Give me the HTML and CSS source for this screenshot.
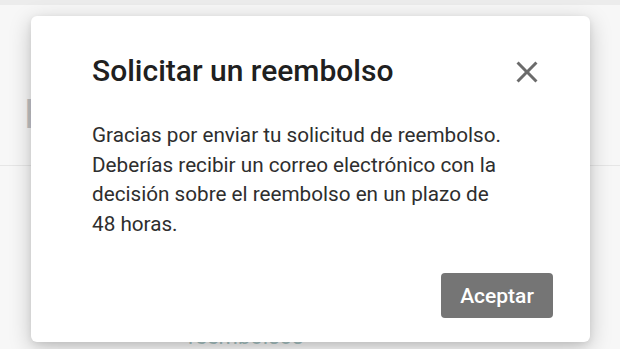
FILE: index.html
```html
<!DOCTYPE html>
<html lang="es">
<head>
<meta charset="utf-8">
<title>Solicitar un reembolso</title>
<link rel="stylesheet" href="styles.css">
</head>
<body>
<div class="page">
  <div class="topbar"></div>
  <h1 class="page-title">Historial</h1>
  <div class="divider"></div>
  <div class="page-link">reembolsos</div>
</div>
<div class="overlay">
  <div class="modal" role="dialog" aria-labelledby="mtitle">
    <div class="modal-head">
      <h2 id="mtitle" class="modal-title">Solicitar un reembolso</h2>
      <button class="close" aria-label="Cerrar">
        <svg viewBox="0 0 24 24" width="36" height="36"><path d="M19 6.41L17.59 5 12 10.59 6.41 5 5 6.41 10.59 12 5 17.59 6.41 19 12 13.41 17.59 19 19 17.59 13.41 12z" fill="#6b6b6b"/></svg>
      </button>
    </div>
    <p class="modal-body">Gracias por enviar tu solicitud de reembolso. Deberías recibir un correo electrónico con la decisión sobre el reembolso en un plazo de 48 horas.</p>
    <div class="modal-actions">
      <button class="accept">Aceptar</button>
    </div>
  </div>
</div>
</body>
</html>
```
FILE: styles.css
```css
html, body {
  margin: 0;
  padding: 0;
}
body {
  width: 620px;
  height: 349px;
  overflow: hidden;
  background: #f7f7f7;
  font-family: Roboto, "Noto Sans", Arial, sans-serif;
  position: relative;
}
.page {
  display: flex;
  flex-direction: column;
}
.topbar {
  height: 5px;
  background: #ececec;
}
.page-title {
  margin: 86px 0 0 24px;
  font-size: 40px;
  font-weight: 400;
  color: #c4c4c4;
  line-height: 48px;
}
.divider {
  margin-top: 26px;
  height: 1px;
  background: #e6e6e6;
}
.page-link {
  margin: 158px 0 0 188px;
  font-size: 22px;
  color: #a8c4c4;
}
.overlay {
  position: absolute;
  inset: 0;
}
.modal {
  position: absolute;
  left: 31px;
  top: 16px;
  width: 559px;
  height: 326px;
  box-sizing: border-box;
  padding: 35px 45px 0 61px;
  background: #fff;
  border-radius: 6px;
  box-shadow: 0 6px 22px rgba(0, 0, 0, 0.22), 0 2px 6px rgba(0, 0, 0, 0.08);
}
.modal-head {
  display: flex;
  justify-content: space-between;
  align-items: center;
}
.modal-title {
  margin: 0;
  font-size: 30px;
  font-weight: 500;
  line-height: 36px;
  color: #202020;
}
.close {
  width: 36px;
  height: 36px;
  padding: 0;
  border: 0;
  background: none;
  display: flex;
  margin-top: 3px;
}
.modal-body {
  margin: 31px 0 0;
  width: 421px;
  font-size: 20.7px;
  line-height: 29.5px;
  color: #2e2e2e;
}
.modal-actions {
  display: flex;
  justify-content: flex-end;
  margin-top: 34px;
}
.accept {
  width: 112px;
  height: 45px;
  margin-right: -8px;
  border: 0;
  border-radius: 4px;
  background: #757575;
  color: #fff;
  font-family: Roboto, "Noto Sans", Arial, sans-serif;
  font-size: 21px;
  font-weight: 500;
}
```
